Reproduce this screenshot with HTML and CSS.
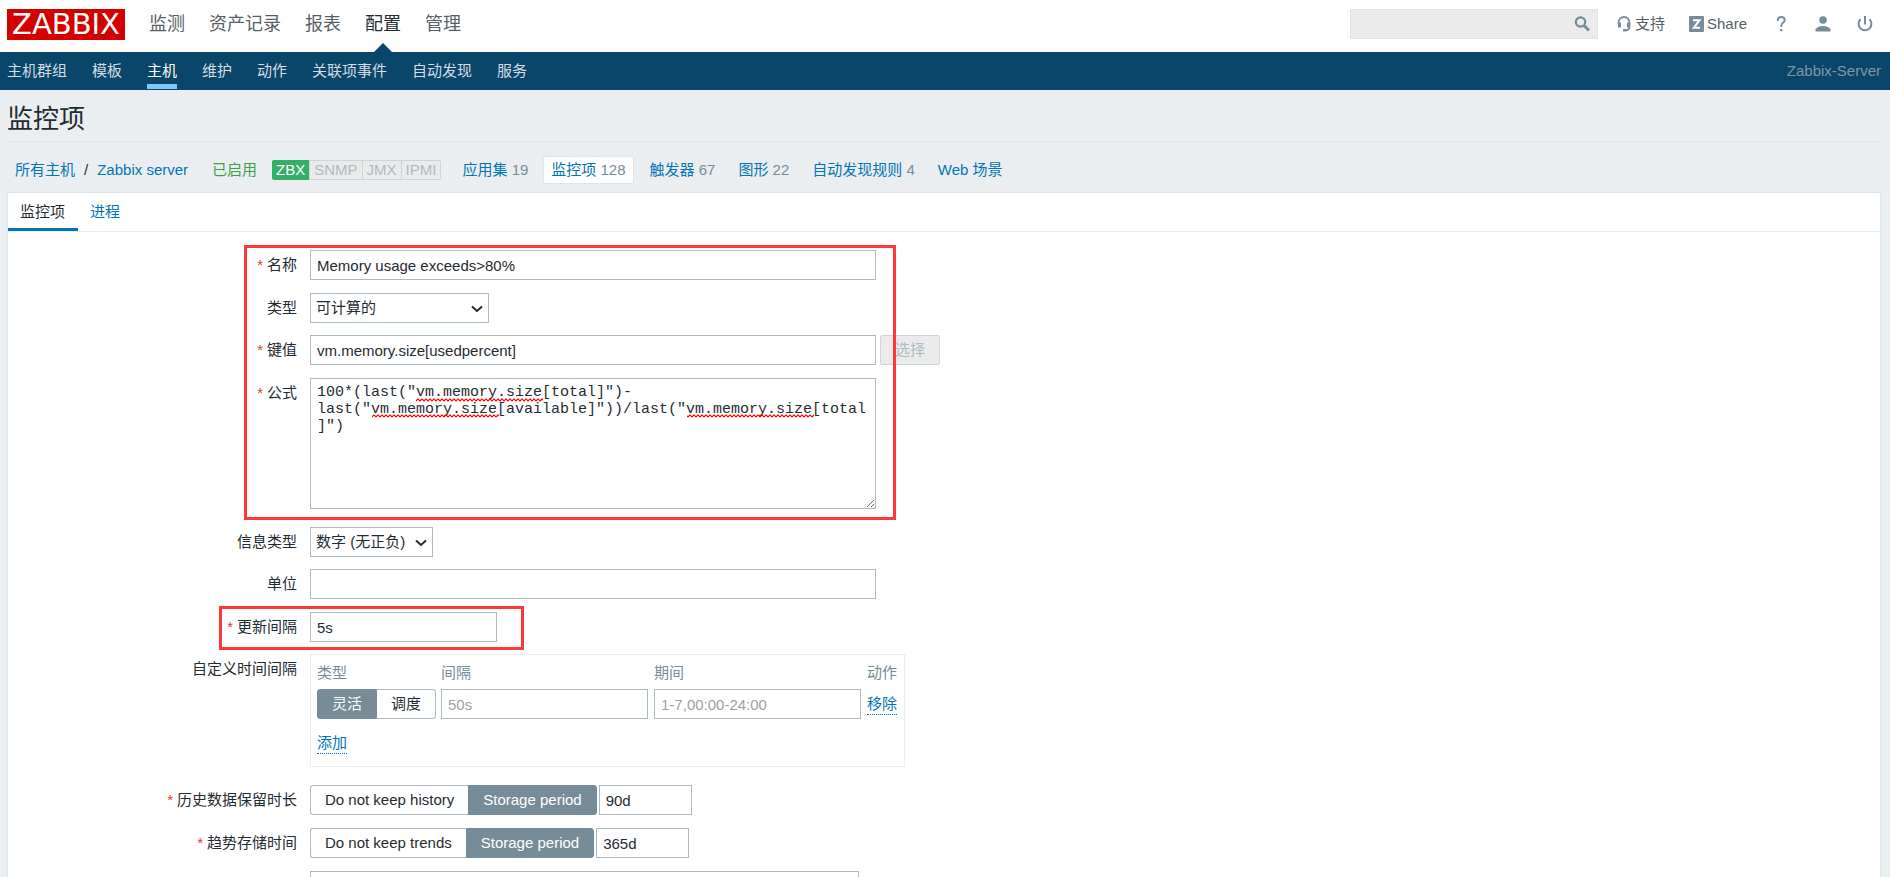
FILE: index.html
```html
<!DOCTYPE html>
<html lang="zh-CN">
<head>
<meta charset="utf-8">
<title>监控项</title>
<link rel="stylesheet" href="styles.css">
</head>
<body>
<header class="top">
  <a class="logo" href="#">ZABBIX</a>
  <nav class="menu">
    <a href="#">监测</a>
    <a href="#">资产记录</a>
    <a href="#">报表</a>
    <a class="menu-active" href="#">配置</a>
    <a href="#">管理</a>
  </nav>
  <div class="tools">
    <form class="search">
      <input type="text" aria-label="搜索">
      <button type="button" aria-label="搜索"><svg width="16" height="16" viewBox="0 0 16 16"><circle cx="6.5" cy="6" r="4.700" fill="none" stroke="#768d99" stroke-width="2.200"/><path d="M10 9.500l5 5" stroke="#768d99" stroke-width="3"/></svg></button>
    </form>
    <a class="support" href="#"><svg width="14" height="16" viewBox="0 0 14 16" fill="none" stroke="#768d99"><path d="M1.500 8V6.500a5.500 5.500 0 0 1 11 0V11q0 3-4 3.500" stroke-width="1.800"/><path d="M2.500 6.500v5M11.500 6.500v5" stroke-width="3"/><path d="M6 14.200h3" stroke-width="2.400"/></svg>支持</a>
    <a class="share" href="#"><svg width="15" height="16" viewBox="0 0 15 16"><rect width="15" height="16" rx="1" fill="#768d99"/><path d="M4 4.200h6.500L4.800 11.800H11" fill="none" stroke="#fff" stroke-width="2"/></svg>Share</a>
    <a class="tool" href="#" aria-label="帮助"><svg width="16" height="16" viewBox="0 0 16 16"><path d="M4.800 5V4q0-3 3.500-3 3.400 0 3.400 3 0 1.500-1.800 2.800Q8.200 8 8.200 11" fill="none" stroke="#768d99" stroke-width="1.900"/><path d="M7.100 13h2.200v2.200H7.100z" fill="#768d99"/></svg></a>
    <a class="tool" href="#" aria-label="用户"><svg width="16" height="16" viewBox="0 0 16 16" fill="#768d99"><circle cx="8" cy="4" r="3.800"/><path d="M0.500 15.500v-2q1.500-3.500 7.500-3.500t7.500 3.500v2z"/></svg></a>
    <a class="tool" href="#" aria-label="退出"><svg width="16" height="16" viewBox="0 0 16 16" fill="none" stroke="#768d99" stroke-width="2"><path d="M3.600 3.200a6.400 6.400 0 1 0 8.800 0M8 0v8.500"/></svg></a>
  </div>
</header>
<nav class="submenu">
  <a href="#">主机群组</a>
  <a href="#">模板</a>
  <a class="submenu-active" href="#">主机</a>
  <a href="#">维护</a>
  <a href="#">动作</a>
  <a href="#">关联项事件</a>
  <a href="#">自动发现</a>
  <a href="#">服务</a>
  <span class="server">Zabbix-Server</span>
</nav>
<main>
  <h1>监控项</h1>
  <div class="crumbs">
    <a href="#">所有主机</a><span class="slash">/</span><a href="#">Zabbix server</a>
    <span class="enabled">已启用</span>
    <span class="avail"><span class="on">ZBX</span><span>SNMP</span><span>JMX</span><span>IPMI</span></span>
    <span class="count"><a href="#">应用集</a> 19</span>
    <span class="count current"><a href="#">监控项</a> 128</span>
    <span class="count"><a href="#">触发器</a> 67</span>
    <span class="count"><a href="#">图形</a> 22</span>
    <span class="count"><a href="#">自动发现规则</a> 4</span>
    <span class="count"><a href="#">Web 场景</a></span>
  </div>
  <section class="panel">
    <nav class="tabs"><a class="tab-active" href="#">监控项</a><a href="#">进程</a></nav>
    <form class="fields">
      <div class="row"><label class="req" for="name">名称</label><input class="wide" id="name" type="text" value="Memory usage exceeds&gt;80%"></div>
      <div class="row"><label for="type">类型</label><span class="select type"><select id="type"><option>可计算的</option></select><svg width="12" height="8" viewBox="0 0 12 8"><path d="M1 1.500l5 4.500 5-4.500" fill="none" stroke="#1f2c33" stroke-width="2"/></svg></span></div>
      <div class="row tight"><label class="req" for="key">键值</label><input class="wide" id="key" type="text" value="vm.memory.size[usedpercent]"><button class="pick" type="button" disabled>选择</button></div>
      <div class="row formula"><label class="req" for="formula">公式</label><div class="editor"><textarea class="wide" id="formula" spellcheck="false">100*(last("vm.memory.size[total]")-last("vm.memory.size[available]"))/last("vm.memory.size[total]")</textarea>
        <svg class="spell" width="566" height="60" aria-hidden="true">
          <defs><pattern id="wave" width="4" height="4" patternUnits="userSpaceOnUse"><path d="M-1 0.500L0 1l2 2 2-2 1-0.500" fill="none" stroke="#f00" stroke-width="1.200"/></pattern></defs>
          <rect x="106" y="20" width="127" height="4" fill="url(#wave)"/>
          <rect x="62" y="36" width="127" height="4" fill="url(#wave)"/>
          <rect x="377" y="36" width="127" height="4" fill="url(#wave)"/>
        </svg></div></div>
      <div class="row"><label for="info">信息类型</label><span class="select info"><select id="info"><option>数字 (无正负)</option></select><svg width="12" height="8" viewBox="0 0 12 8"><path d="M1 1.500l5 4.500 5-4.500" fill="none" stroke="#1f2c33" stroke-width="2"/></svg></span></div>
      <div class="row tight"><label for="units">单位</label><input class="wide" id="units" type="text"></div>
      <div class="row"><label class="req" for="update">更新间隔</label><input class="update" id="update" type="text" value="5s"></div>
      <div class="row tight"><span class="label">自定义时间间隔</span>
        <div class="intervals">
          <table>
            <thead><tr><th>类型</th><th>间隔</th><th>期间</th><th>动作</th></tr></thead>
            <tbody>
              <tr>
                <td><div class="toggle"><label><input type="radio" name="kind" checked>灵活</label><label><input type="radio" name="kind">调度</label></div></td>
                <td><input class="delay" type="text" placeholder="50s" aria-label="间隔"></td>
                <td><input class="delay" type="text" placeholder="1-7,00:00-24:00" aria-label="期间"></td>
                <td><button class="link" type="button">移除</button></td>
              </tr>
            </tbody>
          </table>
          <button class="link add" type="button">添加</button>
        </div>
      </div>
      <div class="row history"><label class="req" for="history">历史数据保留时长</label><div class="toggle"><label><input type="radio" name="hist">Do not keep history</label><label><input type="radio" name="hist" checked>Storage period</label></div><input class="period" id="history" type="text" value="90d"></div>
      <div class="row"><label class="req" for="trends">趋势存储时间</label><div class="toggle"><label><input type="radio" name="trend">Do not keep trends</label><label><input type="radio" name="trend" checked>Storage period</label></div><input class="period" id="trends" type="text" value="365d"></div>
      <div class="row"><span class="label"></span><input class="valuemap" type="text" aria-label="查看值"></div>
      <div class="mark mark-main"></div>
      <div class="mark mark-update"></div>
    </form>
  </section>
</main>
</body>
</html>
```
FILE: styles.css
```css
* { box-sizing: border-box; }
html { height: 100%; overflow: hidden; }
body {
  margin: 0;
  height: 100%;
  overflow: hidden;
  background: #ebeef0;
  color: #1f2c33;
  font: 15px/18px "Liberation Sans", Arial, "Noto Sans CJK SC", sans-serif;
}
a { color: #0275b8; text-decoration: none; }
input, select, textarea, button { font: inherit; color: inherit; margin: 0; border-radius: 0; }

.top { display: flex; align-items: center; height: 52px; padding: 0 7px; background: #fff; }
.logo { width: 118px; height: 31px; margin-top: -3px; background: #d40000; color: #fff; font: 29px/31px "DejaVu Sans", sans-serif; text-align: center; }
.menu { display: flex; align-self: stretch; margin-left: 12px; font-size: 18px; line-height: 48px; }
.menu a { position: relative; padding: 0 12px; color: #565f66; }
.menu .menu-active { color: #1f2c33; }
.menu-active::after { content: ""; position: absolute; bottom: 0; left: 50%; margin-left: -9px; border: 9px solid transparent; border-top: 0; border-bottom-color: #0a466a; }
.tools { display: flex; align-items: center; margin: -4px -3px 0 auto; }
.tools a { display: flex; align-items: center; color: #565f66; }
.tools svg { flex: none; }
.search { position: relative; width: 248px; margin-right: 19px; }
.search input { display: block; width: 100%; height: 30px; background: #ebebeb; border: 1px solid #dfe4e7; }
.search button { position: absolute; right: 8px; top: 7px; width: 16px; height: 16px; padding: 0; border: 0; background: none; }
.search svg { display: block; }
.support { gap: 4px; margin-right: 24px; }
.share { gap: 3px; margin-right: 13px; }
.tools .tool { width: 42px; justify-content: center; }

.submenu { display: flex; height: 38px; padding: 0 9px 0 7px; background: #0a466a; gap: 25px; line-height: 38px; }
.submenu a { color: #d3dde3; }
.submenu .submenu-active { color: #fff; border-bottom: 5px solid #81c8f8; height: 37px; }
.server { margin-left: auto; color: #7c96a5; }

main { padding: 0 9px 0 7px; }
h1 { margin: 0; height: 52px; border-bottom: 1px solid #dfe4e7; font-size: 26px; font-weight: 400; line-height: 58px; }
.crumbs { display: flex; align-items: center; height: 50px; padding: 5px 0 0 8px; }
.slash { margin: 0 9px; }
.enabled { margin: 0 15px 0 24px; color: #429e47; }
.avail { display: flex; margin-right: 13px; border: 1px solid #ccd5d9; border-radius: 2px; background: #ebebeb; color: #acbbc2; line-height: 18px; }
.avail span { padding: 0 4px; border-left: 1px solid #ccd5d9; }
.avail .on { margin: -1px 0 -1px -1px; padding: 1px 4px; border: 0; border-radius: 2px 0 0 2px; background: #34af67; color: #fff; }
.count { padding: 4px 7px; margin-right: 7px; border: 1px solid transparent; color: #768d99; }
.count.current { margin-right: 8px; background: #fff; border-color: #dfe4e7; border-radius: 2px; }

.panel { border: 1px solid #dfe4e7; background: #fff; }
.tabs { display: flex; height: 39px; border-bottom: 1px solid #ebeef0; line-height: 37px; }
.tabs a { padding: 0 13px 0 12px; }
.tabs .tab-active { color: #1f2c33; border-bottom: 3px solid #0275b8; }
.fields { position: relative; padding: 5px 0 20px; }
.row { display: flex; align-items: flex-start; margin-top: 13px; }
.tight { margin-top: 12px; }
.formula { padding-bottom: 5px; }
.history { margin-top: 18px; }
.row > label, .label { flex: none; width: 289px; margin-right: 13px; text-align: right; line-height: 30px; }
.req::before { content: "*"; color: #e33734; margin-right: 4px; }
.fields input, .fields select, textarea { height: 30px; padding: 0 6px; border: 1px solid #acbbc2; background: #fff; }
.fields .wide { width: 566px; }
.select { position: relative; }
.select select { width: 100%; appearance: none; padding: 0 5px; display: block; }
.select svg { position: absolute; right: 6px; top: 12px; pointer-events: none; }
.type { width: 179px; }
.info { width: 123px; }
.fields .update { width: 187px; }
.pick { width: 60px; height: 30px; margin-left: 4px; padding: 0; border: 1px solid #ccd5d9; border-radius: 2px; background: #ebebeb; color: #acbbc2; }
.editor { position: relative; height: 131px; }
.editor textarea { display: block; height: 131px; padding: 5px 6px; font: 15px/17px "Liberation Mono", monospace; }
.spell { position: absolute; left: 0; top: 0; pointer-events: none; }
.intervals { width: 595px; height: 113px; padding: 6px; border: 1px solid #ebeef0; }
table { border-collapse: collapse; }
th { padding: 0 0 5px; color: #768d99; font-weight: 400; text-align: left; line-height: 23px; }
td { padding: 0 6px 0 0; vertical-align: top; }
td:first-child { padding-right: 5px; }
td:last-child { padding: 5px 0 0; }
.fields .delay { display: block; width: 207px; }
.delay::placeholder { color: #9f9f9f; opacity: 1; }
.link { padding: 0; border: 0; border-bottom: 1px dotted #0275b8; background: none; color: #0275b8; line-height: 20px; }
.add { display: block; margin-top: 14px; }
.toggle { display: flex; height: 30px; line-height: 28px; }
.toggle label { padding: 0 14px; border: 1px solid #acbbc2; border-radius: 0 3px 3px 0; }
.toggle label:first-child { border-radius: 3px 0 0 3px; }
.toggle label:has(:checked) { border-color: #768d99; background: #768d99; color: #fff; }
.toggle label:first-child:not(:has(:checked)) { border-right: 0; }
.toggle label:last-child:not(:has(:checked)) { border-left: 0; }
.toggle input { position: absolute; width: 1px; height: 1px; opacity: 0; pointer-events: none; }
.fields .period { width: 93px; margin-left: 2px; }
.fields .valuemap { width: 549px; }
.mark { position: absolute; border: 3px solid #fc3838; pointer-events: none; }
.mark-main { left: 236px; top: 13px; width: 652px; height: 275px; }
.mark-update { left: 211px; top: 374px; width: 305px; height: 44px; }
```
